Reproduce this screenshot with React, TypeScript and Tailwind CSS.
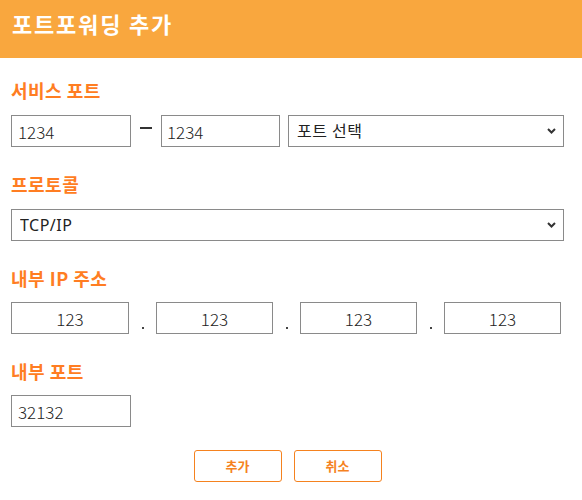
import React from 'react';

/**
 * PortForwardAdd — 포트포워딩 추가 폼
 */

const LABEL = 'block h-[24px] leading-[24px] text-[18px] font-bold tracking-[0.5px] text-[#ff7d22] mb-[13px]';
const INPUT =
  'h-[32px] border border-[#8a8a8a] bg-white text-[17px] font-light text-[#222] outline-none font-["Noto_Sans_CJK_KR",sans-serif]';

function Chevron() {
  return (
    <svg width="9" height="6" viewBox="0 0 9 6" className="absolute right-[8px] top-[13px] pointer-events-none">
      <path d="M1 1 L4.5 4.5 L8 1" fill="none" stroke="#333" strokeWidth="2" />
    </svg>
  );
}

function Select({ value, className }: { value: string; className: string }) {
  return (
    <div className={`relative ${className}`}>
      <select
        defaultValue={value}
        className="w-full h-[32px] appearance-none border border-[#8a8a8a] bg-white pl-[8px] text-[16px] tracking-[0.5px] text-[#222] outline-none font-['Noto_Sans','Noto_Sans_CJK_KR',sans-serif]"
      >
        <option>{value}</option>
      </select>
      <Chevron />
    </div>
  );
}

export default function App() {
  const ip = ['123', '123', '123', '123'];

  return (
    <div className="w-[582px] h-[500px] bg-white font-['Noto_Sans_CJK_KR',sans-serif]">
      {/* Header */}
      <div className="h-[58px] bg-[#f9a73e] pl-[12px] pt-[8px]">
        <h1 className="text-[22px] leading-[30px] font-bold text-white tracking-[1.8px]">포트포워딩 추가</h1>
      </div>

      <div className="pt-[20px] pl-[11px] w-[564px]">
        {/* 서비스 포트 */}
        <label className={LABEL}>서비스 포트</label>
        <div className="flex items-center mb-[25px]">
          <input defaultValue="1234" className={`${INPUT} w-[120px] pl-[6px]`} />
          <span className="w-[30px] flex justify-center">
            <span className="block w-[12px] h-[2px] bg-[#333] -mt-[4px]" />
          </span>
          <input defaultValue="1234" className={`${INPUT} w-[119px] pl-[5px]`} />
          <Select value="포트 선택" className="ml-[8px] flex-1" />
        </div>

        {/* 프로토콜 */}
        <label className={LABEL}>프로토콜</label>
        <Select value="TCP/IP" className="w-full mb-[25px]" />

        {/* 내부 IP 주소 */}
        <label className={LABEL}>내부 IP 주소</label>
        <div className="flex items-end mb-[25px] -mt-[1px]">
          {ip.map((v, i) => (
            <React.Fragment key={i}>
              <input defaultValue={v} className={`${INPUT} ${i === 0 ? 'w-[118px]' : 'w-[117px]'} text-center`} />
              {i < ip.length - 1 && (
                <span className="w-[27px] flex justify-center pb-[5px]">
                  <span className="block w-[2px] h-[2px] bg-[#444]" />
                </span>
              )}
            </React.Fragment>
          ))}
        </div>

        {/* 내부 포트 */}
        <label className={LABEL}>내부 포트</label>
        <input defaultValue="32132" className={`${INPUT} w-[120px] pl-[6px] block -mt-[1px]`} />

        {/* Buttons */}
        <div className="flex justify-center gap-[12px] mt-[23px] w-[553px]">
          <button className="w-[88px] h-[32px] border border-[#f5821f] rounded-[3px] text-[13px] font-bold text-[#f5821f] bg-white">
            추가
          </button>
          <button className="w-[88px] h-[32px] border border-[#f5821f] rounded-[3px] text-[13px] font-bold text-[#f5821f] bg-white">
            취소
          </button>
        </div>
      </div>
    </div>
  );
}
